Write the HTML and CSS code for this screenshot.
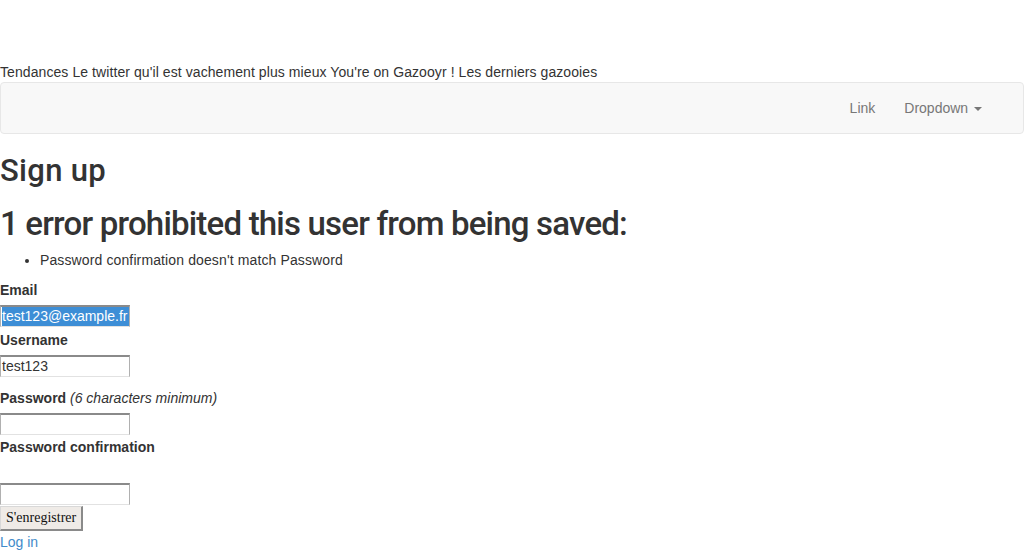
FILE: index.html
```html
<!DOCTYPE html>
<html lang="fr">
<head>
<meta charset="utf-8">
<title>Sign up</title>
<link rel="stylesheet" href="styles.css">
</head>
<body>
<header class="top">
  <div class="top-links">Tendances Le twitter qu'il est vachement plus mieux You're on Gazooyr ! Les derniers gazooies</div>
  <nav class="navbar">
    <ul class="nav">
      <li><a href="#">Link</a></li>
      <li><a href="#">Dropdown <span class="caret"></span></a></li>
    </ul>
  </nav>
</header>
<main>
  <h2 class="title">Sign up</h2>
  <div class="errors">
    <h2 class="err-title">1 error prohibited this user from being saved:</h2>
    <ul class="err-list">
      <li>Password confirmation doesn't match Password</li>
    </ul>
  </div>
  <form class="form">
    <div class="field f-email">
      <label>Email</label>
      <div class="input"><span class="sel">test123@example.fr</span></div>
    </div>
    <div class="field f-user">
      <label>Username</label>
      <div class="input">test123</div>
    </div>
    <div class="field f-pass">
      <label>Password <em>(6 characters minimum)</em></label>
      <div class="input"></div>
    </div>
    <div class="field f-conf">
      <label>Password confirmation</label>
      <div class="input"></div>
    </div>
    <button type="button" class="btn">S'enregistrer</button>
  </form>
  <a class="login" href="#">Log in</a>
</main>
</body>
</html>
```
FILE: styles.css
```css
* { box-sizing: border-box; }
html, body { margin: 0; padding: 0; }
body {
  font-family: "Liberation Sans", Arial, sans-serif;
  font-size: 14px;
  line-height: 20px;
  color: #333;
  background: #fff;
}
.top { padding-top: 62px; }
.top-links { height: 20px; letter-spacing: 0.08px; }
.navbar {
  height: 52px;
  background: #f8f8f8;
  border: 1px solid #e7e7e7;
  border-radius: 4px;
  display: flex;
  justify-content: flex-end;
  padding-right: 26px;
}
.nav { list-style: none; margin: 0; padding: 0; display: flex; }
.nav a {
  display: block;
  padding: 15px;
  line-height: 20px;
  color: #777;
  text-decoration: none;
}
.nav li:first-child a { padding-right: 14px; }
.caret {
  display: inline-block;
  width: 0; height: 0;
  margin-left: 2px;
  vertical-align: middle;
  border-top: 4px solid #777;
  border-left: 4px solid transparent;
  border-right: 4px solid transparent;
}
main { padding-top: 20px; }
.title {
  margin: 0;
  font-family: Roboto, "Liberation Sans", sans-serif;
  font-size: 31px;
  line-height: 33px;
  font-weight: 500;
  letter-spacing: 0.3px;
}
.err-title {
  margin: 17px 0 0;
  font-family: Roboto, "Liberation Sans", sans-serif;
  font-size: 33px;
  line-height: 40px;
  font-weight: 500;
  letter-spacing: -0.8px;
}
.err-list { margin: 6px 0 0; padding-left: 40px; letter-spacing: 0.12px; }
.form { padding-top: 10px; }
.field label { display: block; font-weight: bold; line-height: 20px; margin-bottom: 5px; }
.field em { font-weight: normal; }
.input {
  width: 130px;
  height: 22px;
  border-style: solid;
  border-width: 2px 1px 1px 1px;
  border-color: #8a8a8a #b0b0b0 #e2e2e2 #b0b0b0;
  background: #fff;
  font-size: 14px;
  line-height: 19px;
  padding: 0 1px;
  white-space: nowrap;
  overflow: hidden;
}
.sel { background: #3d8ed6; color: #fff; display: inline-block; line-height: 19px; padding-right: 1px; }
.f-user { margin-top: 3px; }
.f-pass { margin-top: 11px; }
.f-conf { margin-top: 2px; }
.f-conf label { margin-bottom: 26px; }
.btn {
  display: block;
  margin: 1px 0 0;
  height: 25px;
  padding: 0 5px;
  font-family: "Liberation Serif", "Times New Roman", serif;
  font-size: 14px;
  color: #111;
  background: #efebe7;
  border-style: solid;
  border-width: 1px 2px 2px 1px;
  border-color: #d8d8d8 #8a8a8a #8a8a8a #d8d8d8;
}
.login { display: block; margin-top: 1px; color: #428bca; text-decoration: none; line-height: 20px; }
```
